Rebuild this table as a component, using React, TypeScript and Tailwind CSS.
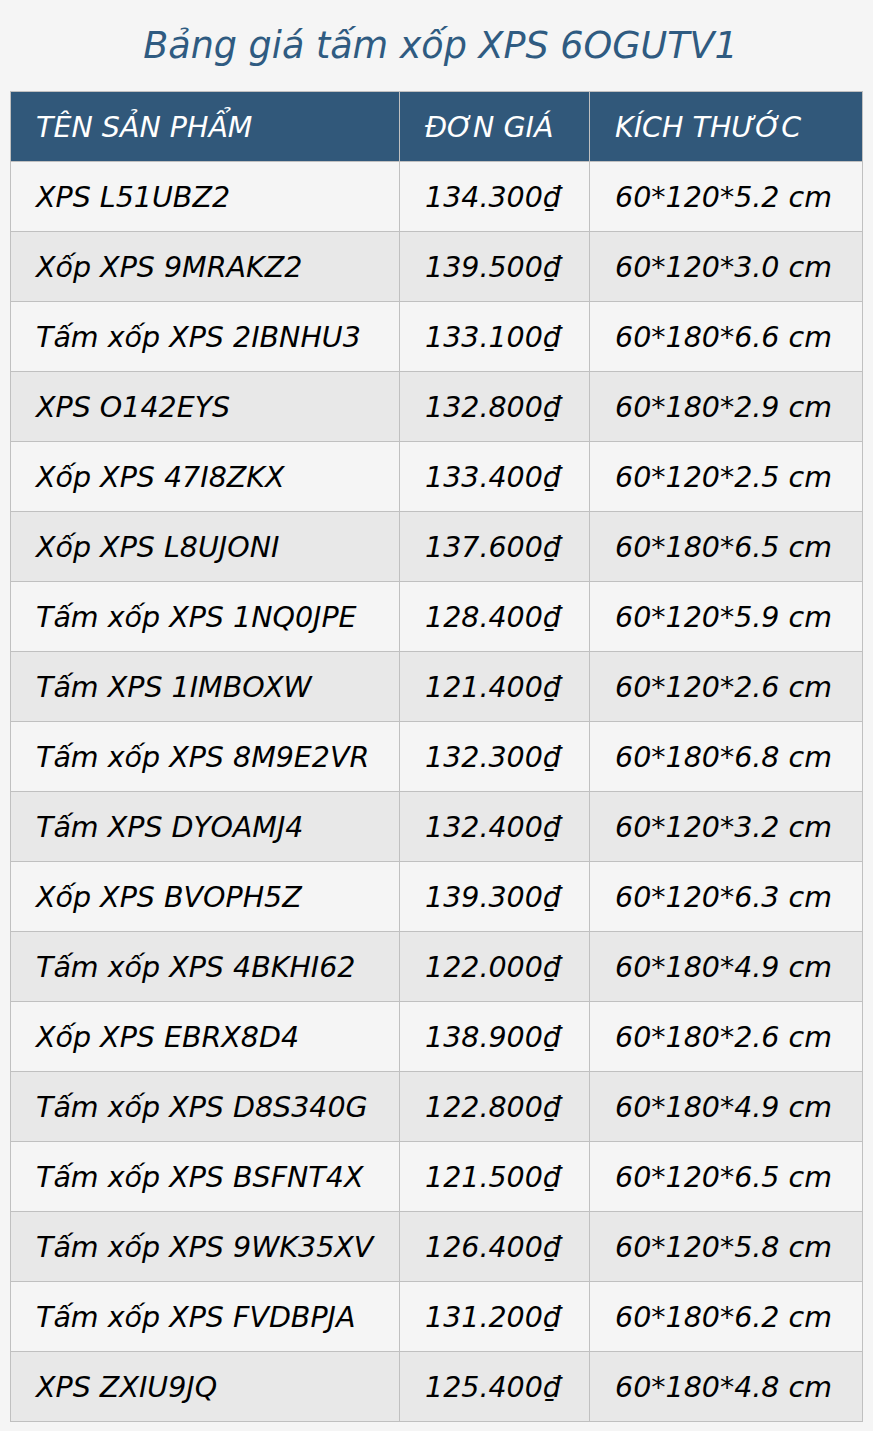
const rows: [string, string, string][] = [
  ["XPS L51UBZ2", "134.300₫", "60*120*5.2 cm"],
  ["Xốp XPS 9MRAKZ2", "139.500₫", "60*120*3.0 cm"],
  ["Tấm xốp XPS 2IBNHU3", "133.100₫", "60*180*6.6 cm"],
  ["XPS O142EYS", "132.800₫", "60*180*2.9 cm"],
  ["Xốp XPS 47I8ZKX", "133.400₫", "60*120*2.5 cm"],
  ["Xốp XPS L8UJONI", "137.600₫", "60*180*6.5 cm"],
  ["Tấm xốp XPS 1NQ0JPE", "128.400₫", "60*120*5.9 cm"],
  ["Tấm XPS 1IMBOXW", "121.400₫", "60*120*2.6 cm"],
  ["Tấm xốp XPS 8M9E2VR", "132.300₫", "60*180*6.8 cm"],
  ["Tấm XPS DYOAMJ4", "132.400₫", "60*120*3.2 cm"],
  ["Xốp XPS BVOPH5Z", "139.300₫", "60*120*6.3 cm"],
  ["Tấm xốp XPS 4BKHI62", "122.000₫", "60*180*4.9 cm"],
  ["Xốp XPS EBRX8D4", "138.900₫", "60*180*2.6 cm"],
  ["Tấm xốp XPS D8S340G", "122.800₫", "60*180*4.9 cm"],
  ["Tấm xốp XPS BSFNT4X", "121.500₫", "60*120*6.5 cm"],
  ["Tấm xốp XPS 9WK35XV", "126.400₫", "60*120*5.8 cm"],
  ["Tấm xốp XPS FVDBPJA", "131.200₫", "60*180*6.2 cm"],
  ["XPS ZXIU9JQ", "125.400₫", "60*180*4.8 cm"],
];

const cell = "border border-[#c0c0c0] px-[25px] pt-[3px] h-[70px] text-left align-middle font-normal";

export default function App() {
  return (
    <div className="min-h-screen bg-[#f5f5f5] italic font-['DejaVu_Sans',sans-serif] pb-[10px]">
      <h1 className="h-[91px] flex items-center justify-center text-[36.5px] text-[#2f5b81] pt-[2px] pl-[8px]">
        Bảng giá tấm xốp XPS 6OGUTV1
      </h1>
      <table className="ml-[10px] w-[852px] border-collapse table-fixed text-[28.5px] leading-none">
        <colgroup>
          <col className="w-[389px]" />
          <col className="w-[190px]" />
          <col className="w-[273px]" />
        </colgroup>
        <thead>
          <tr className="bg-[#31587a] text-white">
            <th className={cell}>TÊN SẢN PHẨM</th>
            <th className={cell}>ĐƠN GIÁ</th>
            <th className={cell}>KÍCH THƯỚC</th>
          </tr>
        </thead>
        <tbody className="text-black">
          {rows.map((r, i) => (
            <tr key={r[0]} className={i % 2 === 0 ? "bg-[#f5f5f5]" : "bg-[#e8e8e8]"}>
              <td className={cell}>{r[0]}</td>
              <td className={cell}>{r[1]}</td>
              <td className={cell}>{r[2]}</td>
            </tr>
          ))}
        </tbody>
      </table>
    </div>
  );
}
